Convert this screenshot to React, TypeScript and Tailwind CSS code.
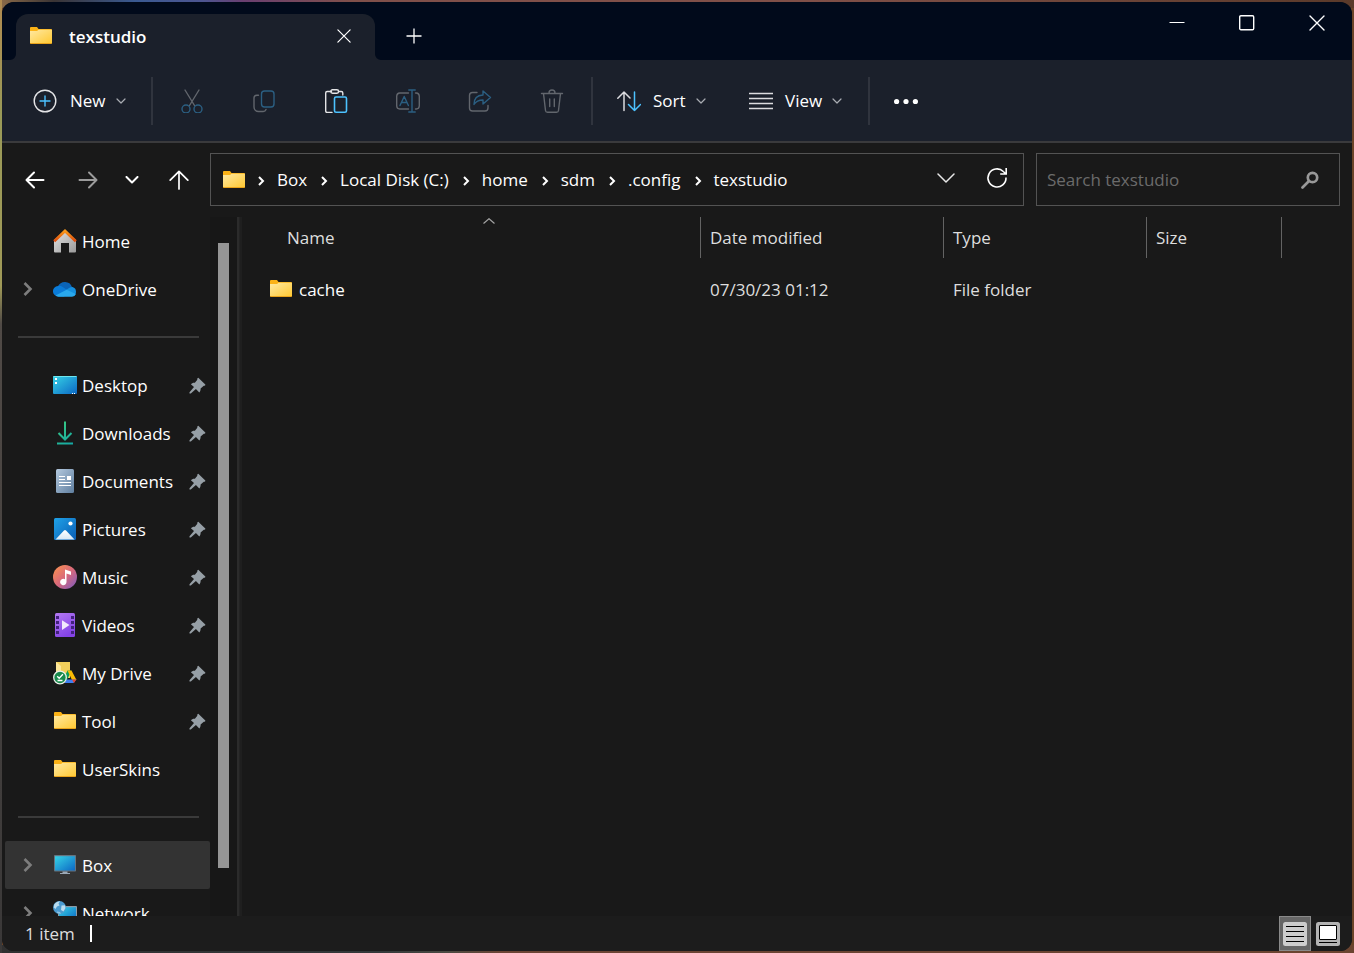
import type { ReactNode } from "react";

const stroke = { fill: "none", strokeLinecap: "round", strokeLinejoin: "round" } as const;

function Folder() {
  return (
    <svg viewBox="0 0 24 18" className="h-[18px] w-6 shrink-0" aria-hidden="true">
      <defs>
        <linearGradient id="folder" x1="0" y1="0" x2="1" y2="1">
          <stop offset="0" stopColor="#ffe9a2" />
          <stop offset="1" stopColor="#ffc934" />
        </linearGradient>
      </defs>
      <path d="M1 1a1 1 0 0 1 1-1h6l1.500 2H22a1 1 0 0 1 1 1v5H1z" fill="#fbb216" />
      <path d="M1 4h7l1.500-1.200H23V16H1z" fill="url(#folder)" />
      <path d="M1 16h22v.3a.7.7 0 0 1-.7.700H1.700a.7.7 0 0 1-.7-.7z" fill="#eaa31a" />
    </svg>
  );
}

function SmallChevron() {
  return (
    <svg viewBox="0 0 10 6" className="h-[6px] w-[10px]" {...stroke} stroke="#a9acb2" strokeWidth="1.2" aria-hidden="true">
      <path d="M1 1l4 4 4-4" />
    </svg>
  );
}

function CrumbChevron() {
  return (
    <svg viewBox="0 0 8 10" className="mt-[3px] h-[10px] w-2 shrink-0" fill="none" stroke="#fff" strokeWidth="2" aria-hidden="true">
      <path d="M2 1l4 4-4 4" />
    </svg>
  );
}

function ExpandChevron() {
  return (
    <svg viewBox="0 0 10 14" className="h-[14px] w-[10px]" fill="none" stroke="#7d7d7d" strokeWidth="2.6" aria-hidden="true">
      <path d="M1.500 1l6 6-6 6" />
    </svg>
  );
}

function CloseIcon({ className }: { className: string }) {
  return (
    <svg viewBox="0 0 16 16" className={className} {...stroke} stroke="#fff" strokeWidth="1.4" aria-hidden="true">
      <path d="M1 1l14 14M15 1L1 15" />
    </svg>
  );
}

function Pin() {
  return (
    <svg viewBox="0 0 17 17" className="h-[17px] w-[17px]" fill="#969fa6" aria-hidden="true">
      <path d="M9.300.8L16.300 7.400C16.600 8 15.800 8.700 14.800 8.700L11.600 11.600C11.700 13.300 11.200 14.700 10.300 15.400L6.900 12 1.800 16.500H.5V15.200L5 10.100 1.900 7.200C2.700 6.200 4.200 5.500 5.900 5.700L8.300 2.700C8.100 1.800 8.500.9 9.300.8z" />
    </svg>
  );
}

const box = "h-6 w-6";

function HomeIcon() {
  return (
    <svg viewBox="0 0 24 24" className={box} aria-hidden="true">
      <defs>
        <linearGradient id="wall" x1="0" y1="0" x2="1" y2="1">
          <stop offset="0" stopColor="#e4e4e4" />
          <stop offset="1" stopColor="#9a9a9a" />
        </linearGradient>
        <linearGradient id="roof" x1="0" y1="0" x2="0" y2="1">
          <stop offset="0" stopColor="#f99a1c" />
          <stop offset="1" stopColor="#dd4a0c" />
        </linearGradient>
      </defs>
      <path d="M1 11L12 2l11 9v11.500a1 1 0 0 1-1 1h-6V14H8v9.500H2a1 1 0 0 1-1-1z" fill="url(#wall)" />
      <path d="M1.200 12.200L12 2l10.800 10.200" fill="none" stroke="url(#roof)" strokeWidth="2.800" />
    </svg>
  );
}

function OneDriveIcon() {
  return (
    <svg viewBox="0 0 24 16" className="h-4 w-6" aria-hidden="true">
      <path d="M5 5.500A7.500 7.500 0 0 1 19 6l-4 5-10 2z" fill="#0b64b8" />
      <path d="M5.500 15.500A5.300 5.300 0 0 1 5 4.900c2-.2 3.400.4 4.700 1.200L17 11l-6 4.500z" fill="#0a7bd8" />
      <path d="M13 9l3.500-2.300c1-.6 2-.8 3-.7a4.900 4.900 0 0 1 .5 9.200z" fill="#1590df" />
      <path d="M2.500 14.500L13.600 8.700 22.900 13a4.600 4.600 0 0 1-3.900 2.700H5.500c-1.200 0-2.300-.5-3-1.200z" fill="#29a8ec" />
    </svg>
  );
}

function BlueGradient({ id }: { id: string }) {
  return (
    <defs>
      <linearGradient id={id} x1="0" y1="0" x2="1" y2="1">
        <stop offset="0" stopColor="#36d3e6" />
        <stop offset="1" stopColor="#0c68c4" />
      </linearGradient>
    </defs>
  );
}

function DesktopIcon() {
  return (
    <svg viewBox="0 0 24 18" className="h-[18px] w-6" aria-hidden="true">
      <BlueGradient id="desk" />
      <rect width="24" height="18" rx="1" fill="url(#desk)" />
      <path d="M.5.500h23" stroke="#6fe6ee" />
      <path d="M2 2h2v2H2zM2 6h2v2H2z" fill="#fff" />
      <path d="M19 17h1v1h-1zM21 17h1v1h-1z" fill="#fff" />
    </svg>
  );
}

function DownloadIcon() {
  return (
    <svg viewBox="0 0 24 24" className={box} fill="none" aria-hidden="true">
      <defs>
        <linearGradient id="down" gradientUnits="userSpaceOnUse" x1="4" y1="1" x2="20" y2="24">
          <stop offset="0" stopColor="#3ccb80" />
          <stop offset="1" stopColor="#12a6a6" />
        </linearGradient>
      </defs>
      <path d="M12 .5V18M5.500 12l6.500 6.500L18.500 12M4 22.500h16" stroke="url(#down)" strokeWidth="2" />
    </svg>
  );
}

function DocumentIcon() {
  return (
    <svg viewBox="0 0 24 24" className={box} aria-hidden="true">
      <defs>
        <linearGradient id="doc" x1="0" y1="0" x2="1" y2="1">
          <stop offset="0" stopColor="#b4c9de" />
          <stop offset="1" stopColor="#5f7e9f" />
        </linearGradient>
      </defs>
      <rect x="3" width="18" height="24" rx="1.500" fill="url(#doc)" />
      <path d="M6 7.500h6M6 10.500h6M6 13.500h12M6 16.500h12" stroke="#fff" />
      <path d="M14 7h4v4h-4z" fill="#fff" />
    </svg>
  );
}

function PictureIcon() {
  return (
    <svg viewBox="0 0 24 24" className={box} aria-hidden="true">
      <defs>
        <linearGradient id="pic" x1="0" y1="0" x2="1" y2="1">
          <stop offset="0" stopColor="#1fa2e8" />
          <stop offset="1" stopColor="#0a5db4" />
        </linearGradient>
        <linearGradient id="hill" x1="0" y1="0" x2="0" y2="1">
          <stop offset="0" stopColor="#fff" />
          <stop offset="1" stopColor="#d6e7f5" />
        </linearGradient>
      </defs>
      <rect x="1" y="1" width="22" height="22" rx="1.500" fill="url(#pic)" />
      <circle cx="17.500" cy="6.500" r="2.100" fill="#fff" />
      <path d="M2.500 22.500l8.500-9a1.400 1.400 0 0 1 2 0l8.500 9z" fill="url(#hill)" />
    </svg>
  );
}

function MusicIcon() {
  return (
    <svg viewBox="0 0 24 24" className={box} aria-hidden="true">
      <defs>
        <linearGradient id="music" x1="0.100" y1="0.100" x2="0.900" y2="0.900">
          <stop offset="0" stopColor="#f58c55" />
          <stop offset="0.500" stopColor="#d9697b" />
          <stop offset="1" stopColor="#8c5db4" />
        </linearGradient>
      </defs>
      <circle cx="12" cy="12" r="12" fill="url(#music)" />
      <path d="M12 4.500l6 2V10l-4.500-1.500V17a3.200 3.200 0 1 1-1.500-2.700z" fill="#fff" />
    </svg>
  );
}

function VideoIcon() {
  return (
    <svg viewBox="0 0 24 24" className={box} aria-hidden="true">
      <defs>
        <linearGradient id="video" x1="0" y1="0" x2="0.500" y2="1">
          <stop offset="0" stopColor="#b47af2" />
          <stop offset="1" stopColor="#8443e6" />
        </linearGradient>
      </defs>
      <rect x="2" width="20" height="24" rx="1.500" fill="url(#video)" />
      <path d="M3 3h3v3H3zM3 8h3v3H3zM3 13h3v3H3zM3 18h3v3H3zM18 3h3v3h-3zM18 8h3v3h-3zM18 13h3v3h-3zM18 18h3v3h-3z" fill="#43217e" />
      <path d="M9 7.200v9.800l7.500-4.900z" fill="#f2eafc" />
    </svg>
  );
}

function DriveIcon() {
  return (
    <svg viewBox="0 0 24 24" className={box} aria-hidden="true">
      <path d="M3 1h14v16H3z" fill="#f2cf5b" />
      <path d="M3 1l5 4v12H3z" fill="#fde698" />
      <path d="M14.500 9.500h4L13 21l-3-2z" fill="#0c9d58" />
      <path d="M14.500 9.500h4l5 9.500h-4.500z" fill="#fbbc05" />
      <path d="M13 18.500h10.300L20.500 22h-9z" fill="#3f7ff0" />
      <path d="M19 18.500h4.300L21 22z" fill="#e8432f" />
      <circle cx="7" cy="16.500" r="6.300" fill="#178a4c" stroke="#e9efe9" strokeWidth="1.300" />
      <path d="M4.200 15.300l2 2 3.700-4M4.500 19.500h5" fill="none" stroke="#fff" strokeWidth="1.300" />
    </svg>
  );
}

function MonitorIcon() {
  return (
    <svg viewBox="0 0 24 20" className="h-5 w-6" aria-hidden="true">
      <BlueGradient id="mon" />
      <rect x="1" y="0" width="22" height="16.500" rx="0.800" fill="#66737f" />
      <rect x="2" y="1.200" width="20" height="14.300" fill="url(#mon)" />
      <path d="M9.500 16.500h5V18H17v1H7v-1h2.500z" fill="#9aa8b6" />
    </svg>
  );
}

function NetworkIcon() {
  return (
    <svg viewBox="0 0 24 24" className={box} aria-hidden="true">
      <BlueGradient id="net" />
      <rect x="5" y="5" width="19" height="15" rx="0.800" fill="#8c9aa6" />
      <rect x="6" y="6.200" width="17" height="13" fill="url(#net)" />
      <circle cx="6.500" cy="6.500" r="6.500" fill="#4b9bd0" />
      <path d="M1.200 3.500C3 1.200 5 .3 7 .3L5.500 2.500 6.500 4.500 4 5.500 2.500 8 .8 6.500zM8.500 4.500L12 4.200l.5 2.800-2 3.500L8 9z" fill="#b9dcef" />
      <path d="M4 10.500l3 .5 1 1.700a6 6 0 0 1-4-1z" fill="#8cc4e4" />
    </svg>
  );
}

type Place = { name: string; icon: ReactNode; pinned?: boolean; expandable?: boolean; selected?: boolean };

const groups: Place[][] = [
  [
    { name: "Home", icon: <HomeIcon /> },
    { name: "OneDrive", icon: <OneDriveIcon />, expandable: true },
  ],
  [
    { name: "Desktop", icon: <DesktopIcon />, pinned: true },
    { name: "Downloads", icon: <DownloadIcon />, pinned: true },
    { name: "Documents", icon: <DocumentIcon />, pinned: true },
    { name: "Pictures", icon: <PictureIcon />, pinned: true },
    { name: "Music", icon: <MusicIcon />, pinned: true },
    { name: "Videos", icon: <VideoIcon />, pinned: true },
    { name: "My Drive", icon: <DriveIcon />, pinned: true },
    { name: "Tool", icon: <Folder />, pinned: true },
    { name: "UserSkins", icon: <Folder /> },
  ],
  [
    { name: "Box", icon: <MonitorIcon />, expandable: true, selected: true },
    { name: "Network", icon: <NetworkIcon />, expandable: true },
  ],
];

function PlaceRow({ place }: { place: Place }) {
  return (
    <li>
      <a
        href="#"
        aria-current={place.selected ? "page" : undefined}
        className={`flex h-12 items-center rounded-xs pr-1 ${place.selected ? "bg-[#333333]" : ""}`}
      >
        <span className="flex w-12 shrink-0 pl-[18px]">{place.expandable && <ExpandChevron />}</span>
        <span className="flex w-6 shrink-0 justify-center">{place.icon}</span>
        <span className="ml-[5px] flex-1 whitespace-nowrap">{place.name}</span>
        {place.pinned && <Pin />}
      </a>
    </li>
  );
}

function Sidebar() {
  return (
    <div className="flex shrink-0 overflow-hidden">
      <nav aria-label="Places" className="w-[208px] pl-[3px]">
        {groups.map((group, i) => (
          <div key={i}>
            {i > 0 && (
              <div className="flex h-12 items-center pr-[11px] pl-[13px]">
                <hr className="w-full border-t-2 border-[#3a3a3a]" />
              </div>
            )}
            <ul>
              {group.map((place) => (
                <PlaceRow key={place.name} place={place} />
              ))}
            </ul>
          </div>
        ))}
      </nav>
      <div className="flex w-[27px] flex-col bg-[#171717] px-2 pt-[26px] pb-12">
        <div className="w-[11px] flex-1 bg-[#959595]" />
      </div>
      <div className="w-[5px] border-x-2 border-l-[#2b2b2b] border-r-[#1f1f1f] bg-[#232323]" />
    </div>
  );
}

function ToolButton({ label, disabled, children }: { label: string; disabled?: boolean; children: ReactNode }) {
  return (
    <button type="button" aria-label={label} disabled={disabled} className="flex w-[72px] items-center justify-center">
      <svg viewBox="0 0 24 24" className={box} {...stroke} strokeWidth="1.400" aria-hidden="true">
        {children}
      </svg>
    </button>
  );
}

function Divider() {
  return <div className="h-12 w-[2px] shrink-0 bg-[#30343e]" />;
}

function Toolbar() {
  const gray = "#62666d";
  const blue = "#2b5f82";
  return (
    <div role="toolbar" aria-label="Commands" className="flex h-[83px] shrink-0 items-center border-b-2 border-[#3a3a3c] bg-[#1b202b]">
      <button type="button" className="flex h-12 w-[149px] items-center pl-[31px]">
        <svg viewBox="0 0 24 24" className={box} {...stroke} strokeWidth="1.400" aria-hidden="true">
          <circle cx="12" cy="12" r="10.800" stroke="#e4e4e6" />
          <path d="M12 7v10M7 12h10" stroke="#4cc2ff" />
        </svg>
        <span className="mr-[10px] ml-[13px]">New</span>
        <SmallChevron />
      </button>
      <Divider />
      <div className="flex h-12 px-[3px]">
        <ToolButton label="Cut" disabled>
          <path d="M5 1l9.500 15.500M19 1L9.500 16.500" stroke={gray} />
          <circle cx="6" cy="20" r="4" stroke={blue} />
          <circle cx="18" cy="20" r="4" stroke={blue} />
        </ToolButton>
        <ToolButton label="Copy" disabled>
          <path d="M6.500 6.200H5a3 3 0 0 0-3 3V18a4.500 4.500 0 0 0 4.500 4.500H11a3 3 0 0 0 3-2" stroke={gray} />
          <rect x="9.500" y="2" width="12.500" height="16" rx="3" stroke={blue} />
        </ToolButton>
        <ToolButton label="Paste">
          <path d="M7.500 2.500H3.200A1.500 1.500 0 0 0 1.700 4v18A1.500 1.500 0 0 0 3.200 23.500H8M14.500 2.500h2.800A1.500 1.500 0 0 1 18.800 4v2" stroke="#e4e4e6" />
          <rect x="6.800" y="0.800" width="7.800" height="3.400" rx="1.700" stroke="#e4e4e6" />
          <rect x="10.500" y="8" width="12" height="15.200" rx="1.500" stroke="#4cc2ff" strokeWidth="1.600" />
        </ToolButton>
        <ToolButton label="Rename" disabled>
          <path d="M12.500 4H3.700A3.200 3.200 0 0 0 .7 7v10a3.200 3.200 0 0 0 3 3h8.800M19.500 4h.8a3.200 3.200 0 0 1 3 3v10a3.200 3.200 0 0 1-3 3h-.8" stroke={gray} />
          <path d="M4 16.500L8.200 7.500l4.200 9M5.500 13.500h5.400M16 1v22M12.800 1h6.400M12.800 23h6.400" stroke={blue} />
        </ToolButton>
        <ToolButton label="Share" disabled>
          <path d="M9 3.500H4.500a3 3 0 0 0-3 3V19a3 3 0 0 0 3 3H17a3 3 0 0 0 3-3v-2.500" stroke={gray} />
          <path d="M15 2l7.500 6.500L15 15v-4c-4.500 0-7 1.300-9 4.500 0-6 3.500-9.300 9-9.500z" stroke={blue} />
        </ToolButton>
        <ToolButton label="Delete" disabled>
          <path d="M1.500 4.500h21M9 4a3 3 0 0 1 6 0M3.500 4.500l2 17A2 2 0 0 0 7.500 23.300h9a2 2 0 0 0 2-1.800l2-17M9.700 10v7.500M14.300 10v7.500" stroke={gray} />
        </ToolButton>
      </div>
      <Divider />
      <button type="button" className="flex h-12 w-[132px] items-center pl-6">
        <svg viewBox="0 0 24 24" className={box} {...stroke} strokeWidth="1.500" aria-hidden="true">
          <path d="M7 21.500V3M.800 9.200L7 3l6 6" stroke="#dcdce0" />
          <path d="M17.500 3v18.500M11.500 15.500l6 6 6-6" stroke="#4cc2ff" />
        </svg>
        <span className="mr-[10px] ml-3">Sort</span>
        <SmallChevron />
      </button>
      <button type="button" className="flex h-12 w-[143px] items-center pl-6">
        <svg viewBox="0 0 24 24" className={box} stroke="#dcdce0" strokeWidth="1.500" aria-hidden="true">
          <path d="M0 4.500h24M0 9.500h24M0 14.500h24M0 19.500h24" />
        </svg>
        <span className="mr-[10px] ml-3">View</span>
        <SmallChevron />
      </button>
      <Divider />
      <ToolButton label="More options">
        <g fill="#fff">
          <circle cx="2.600" cy="12.500" r="2.600" />
          <circle cx="12" cy="12.500" r="2.600" />
          <circle cx="21.400" cy="12.500" r="2.600" />
        </g>
      </ToolButton>
    </div>
  );
}

function TitleBar() {
  return (
    <header className="flex h-[58px] shrink-0 items-end bg-[#010a1b]">
      <div className="relative ml-[14px] flex h-[46px] w-[359px] items-center rounded-t-xl bg-[#1b202b] pr-[10px] pb-[2px] pl-[13px]">
        <svg viewBox="0 0 6 6" className="absolute bottom-0 -left-[6px] h-[6px] w-[6px]" fill="#1b202b" aria-hidden="true">
          <path d="M6 0v6H0a6 6 0 0 0 6-6z" />
        </svg>
        <svg viewBox="0 0 6 6" className="absolute -right-[6px] bottom-0 h-[6px] w-[6px]" fill="#1b202b" aria-hidden="true">
          <path d="M0 0v6h6a6 6 0 0 1-6-6z" />
        </svg>
        <Folder />
        <span className="ml-4 flex-1 font-semibold">texstudio</span>
        <button type="button" aria-label="Close tab" className="flex h-10 w-[42px] items-center justify-center">
          <CloseIcon className="h-[14px] w-[14px]" />
        </button>
      </div>
      <button type="button" aria-label="New tab" className="ml-[15px] flex h-12 w-12 items-center justify-center">
        <svg viewBox="0 0 16 16" className="h-4 w-4" stroke="#fff" strokeWidth="1.300" aria-hidden="true">
          <path d="M8 .5v15M.5 8h15" />
        </svg>
      </button>
      <div className="ml-auto flex self-start">
        <button type="button" aria-label="Minimize" className="flex h-[42px] w-[70px] items-center justify-center">
          <svg viewBox="0 0 16 16" className="h-4 w-4" stroke="#fff" aria-hidden="true">
            <path d="M.5 7.500h15" />
          </svg>
        </button>
        <button type="button" aria-label="Maximize" className="flex h-[42px] w-[70px] items-center justify-center">
          <svg viewBox="0 0 16 16" className="h-4 w-4" fill="none" stroke="#fff" strokeWidth="1.400" aria-hidden="true">
            <rect x="0.700" y="0.700" width="14" height="14" rx="1.200" />
          </svg>
        </button>
        <button type="button" aria-label="Close" className="flex h-[42px] w-[70px] items-center justify-center">
          <CloseIcon className="h-4 w-4" />
        </button>
      </div>
    </header>
  );
}

const path = ["Box", "Local Disk (C:)", "home", "sdm", ".config", "texstudio"];

function AddressRow() {
  return (
    <div className="flex h-[74px] shrink-0 items-center pr-3 pb-[1px]">
      <div className="flex w-[208px] shrink-0 items-center pl-[6px]">
        <button type="button" aria-label="Back" className="flex h-12 w-[53px] items-center justify-center">
          <svg viewBox="0 0 20 18" className="h-[18px] w-5" {...stroke} stroke="#fff" strokeWidth="2" aria-hidden="true">
            <path d="M18.500 9H2M9 1.500L1.500 9 9 16.500" />
          </svg>
        </button>
        <button type="button" aria-label="Forward" disabled className="flex h-12 w-[53px] items-center justify-center">
          <svg viewBox="0 0 20 18" className="h-[18px] w-5" {...stroke} stroke="#9b9b9b" strokeWidth="2" aria-hidden="true">
            <path d="M1.500 9H18M11 1.500L18.500 9 11 16.500" />
          </svg>
        </button>
        <button type="button" aria-label="Recent locations" className="flex h-12 w-9 items-center justify-center">
          <svg viewBox="0 0 14 8" className="h-2 w-[14px]" {...stroke} stroke="#fff" strokeWidth="2" aria-hidden="true">
            <path d="M1.500 1L7 6.500 12.500 1" />
          </svg>
        </button>
        <button type="button" aria-label="Up" className="flex h-12 w-[58px] items-center justify-center">
          <svg viewBox="0 0 20 20" className="h-5 w-5" {...stroke} stroke="#fff" strokeWidth="1.700" aria-hidden="true">
            <path d="M10 19V1.500M1.200 10.200L10 1.300l8.800 8.900" />
          </svg>
        </button>
      </div>
      <div className="flex h-[53px] min-w-0 flex-1 items-center border border-[#535353] pr-[1px] pl-[11px]">
        <Folder />
        <ol className="ml-[11px] flex min-w-0 flex-1 items-center gap-[13px] overflow-hidden">
          {path.map((part) => (
            <li key={part} className="flex items-center gap-3 whitespace-nowrap">
              <CrumbChevron />
              <a href="#">{part}</a>
            </li>
          ))}
        </ol>
        <button type="button" aria-label="Previous locations" className="flex h-full w-[51px] shrink-0 items-center justify-center pb-[3px]">
          <svg viewBox="0 0 18 10" className="h-[10px] w-[18px]" {...stroke} stroke="#e8e8e8" strokeWidth="1.500" aria-hidden="true">
            <path d="M1 1l8 8 8-8" />
          </svg>
        </button>
        <button type="button" aria-label="Refresh" className="flex h-full w-[51px] shrink-0 items-center justify-center pb-[3px]">
          <svg viewBox="0 0 22 22" className="h-[22px] w-[22px]" fill="none" stroke="#fff" strokeWidth="1.600" aria-hidden="true">
            <path d="M20 10.500A9 9 0 1 1 17.300 4.500L19.500 6.500M20.200 1v6h-6" />
          </svg>
        </button>
      </div>
      <label className="ml-3 flex h-[53px] w-[304px] items-center border border-[#535353] pr-5 pl-[10px]">
        <input
          type="search"
          aria-label="Search texstudio"
          placeholder="Search texstudio"
          className="min-w-0 flex-1 bg-transparent outline-none placeholder:text-[#6b6b6b]"
        />
        <svg viewBox="0 0 18 18" className="h-[18px] w-[18px]" fill="none" stroke="#989898" aria-hidden="true">
          <circle cx="11.500" cy="6.500" r="4.700" strokeWidth="2.700" />
          <path d="M8 10l-6.500 6.500" strokeWidth="2.700" strokeLinecap="round" />
        </svg>
      </label>
    </div>
  );
}

function HeaderCell({ children, first }: { children: string; first?: boolean }) {
  return (
    <th scope="col" className="p-0 align-top font-normal">
      <div className={`relative flex h-[41px] items-center border-r border-[#636363] pl-[9px] text-[#dedede] ${first ? "ml-9" : ""}`}>
        {children}
        {first && (
          <svg viewBox="0 0 12 6" className="absolute top-[1px] left-1/2 h-[6px] w-3 -translate-x-1/2" fill="none" stroke="#a0a0a0" strokeWidth="1.200" aria-hidden="true">
            <path d="M.5 5.500L6 .700l5.500 4.800" />
          </svg>
        )}
      </div>
    </th>
  );
}

function FileList() {
  return (
    <main className="min-w-0 flex-1 overflow-hidden">
      <table className="w-full table-fixed border-collapse text-left whitespace-nowrap">
        <colgroup>
          <col className="w-[459px]" />
          <col className="w-[243px]" />
          <col className="w-[203px]" />
          <col className="w-[135px]" />
          <col />
        </colgroup>
        <thead>
          <tr className="h-12">
            <HeaderCell first>Name</HeaderCell>
            <HeaderCell>Date modified</HeaderCell>
            <HeaderCell>Type</HeaderCell>
            <HeaderCell>Size</HeaderCell>
            <td />
          </tr>
        </thead>
        <tbody>
          <tr className="h-12 text-[#dedede]">
            <td className="p-0 pl-[27px]">
              <a href="#" className="flex items-center gap-[6px] text-white">
                <Folder />
                cache
              </a>
            </td>
            <td className="p-0 pl-[9px]">07/30/23 01:12</td>
            <td className="p-0 pl-[9px]">File folder</td>
            <td />
            <td />
          </tr>
        </tbody>
      </table>
    </main>
  );
}

function StatusBar() {
  return (
    <footer className="flex h-[35px] shrink-0 items-center bg-[#1c1c1c] pr-2 pl-[23px] text-[#dedede]">
      <span>1 item</span>
      <span className="ml-[15px] h-[17px] w-[2px] bg-white" />
      <button type="button" aria-label="Details view" aria-pressed="true" className="ml-auto flex h-[35px] w-8 items-center justify-center border border-[#8a8a8a] bg-[#666666]">
        <svg viewBox="0 0 24 24" className="h-6 w-6 shrink-0" aria-hidden="true">
          <rect width="24" height="24" rx="2.500" fill="#cccccc" />
          <path d="M3 4.500h18M3 9.500h18M3 14.500h18M3 19.500h18" stroke="#000" />
        </svg>
      </button>
      <button type="button" aria-label="Large icons view" aria-pressed="false" className="ml-[1px] flex h-[35px] w-8 items-center justify-center">
        <svg viewBox="0 0 24 24" className="h-6 w-6 shrink-0" aria-hidden="true">
          <rect width="24" height="24" rx="2.500" fill="#b4b4b4" />
          <rect x="3.500" y="3.500" width="17" height="14" rx="0.500" fill="#fff" stroke="#000" />
          <path d="M3 20.500h18" stroke="#000" />
        </svg>
      </button>
    </footer>
  );
}

export default function App() {
  return (
    <div className="h-screen bg-[#6b4428] bg-[linear-gradient(180deg,#b08a50_0,#9a9a58_12%,#a09a58_30%,#504a46_34%,#3a3838_100%),linear-gradient(90deg,#8a6a48_0,#3a3434_4%,#3a5a92_10%,#4d5590_15%,#6a3f70_18%,#80504a_26%,#805048_60%,#5a3a2a_100%),linear-gradient(90deg,#303030_0,#34383a_28%,#4a4a42_33%,#6b4434_37%,#6b4430_100%)] bg-[length:2px_100%,100%_8px,100%_8px] bg-[position:left,top,bottom] bg-no-repeat p-[2px]">
      <div className="flex h-full flex-col overflow-hidden rounded-xl bg-[#191919] font-['Open_Sans','Noto_Sans',sans-serif] text-[17px] leading-[25px] text-white">
        <TitleBar />
        <Toolbar />
        <AddressRow />
        <div className="flex min-h-0 flex-1">
          <Sidebar />
          <FileList />
        </div>
        <StatusBar />
      </div>
    </div>
  );
}
